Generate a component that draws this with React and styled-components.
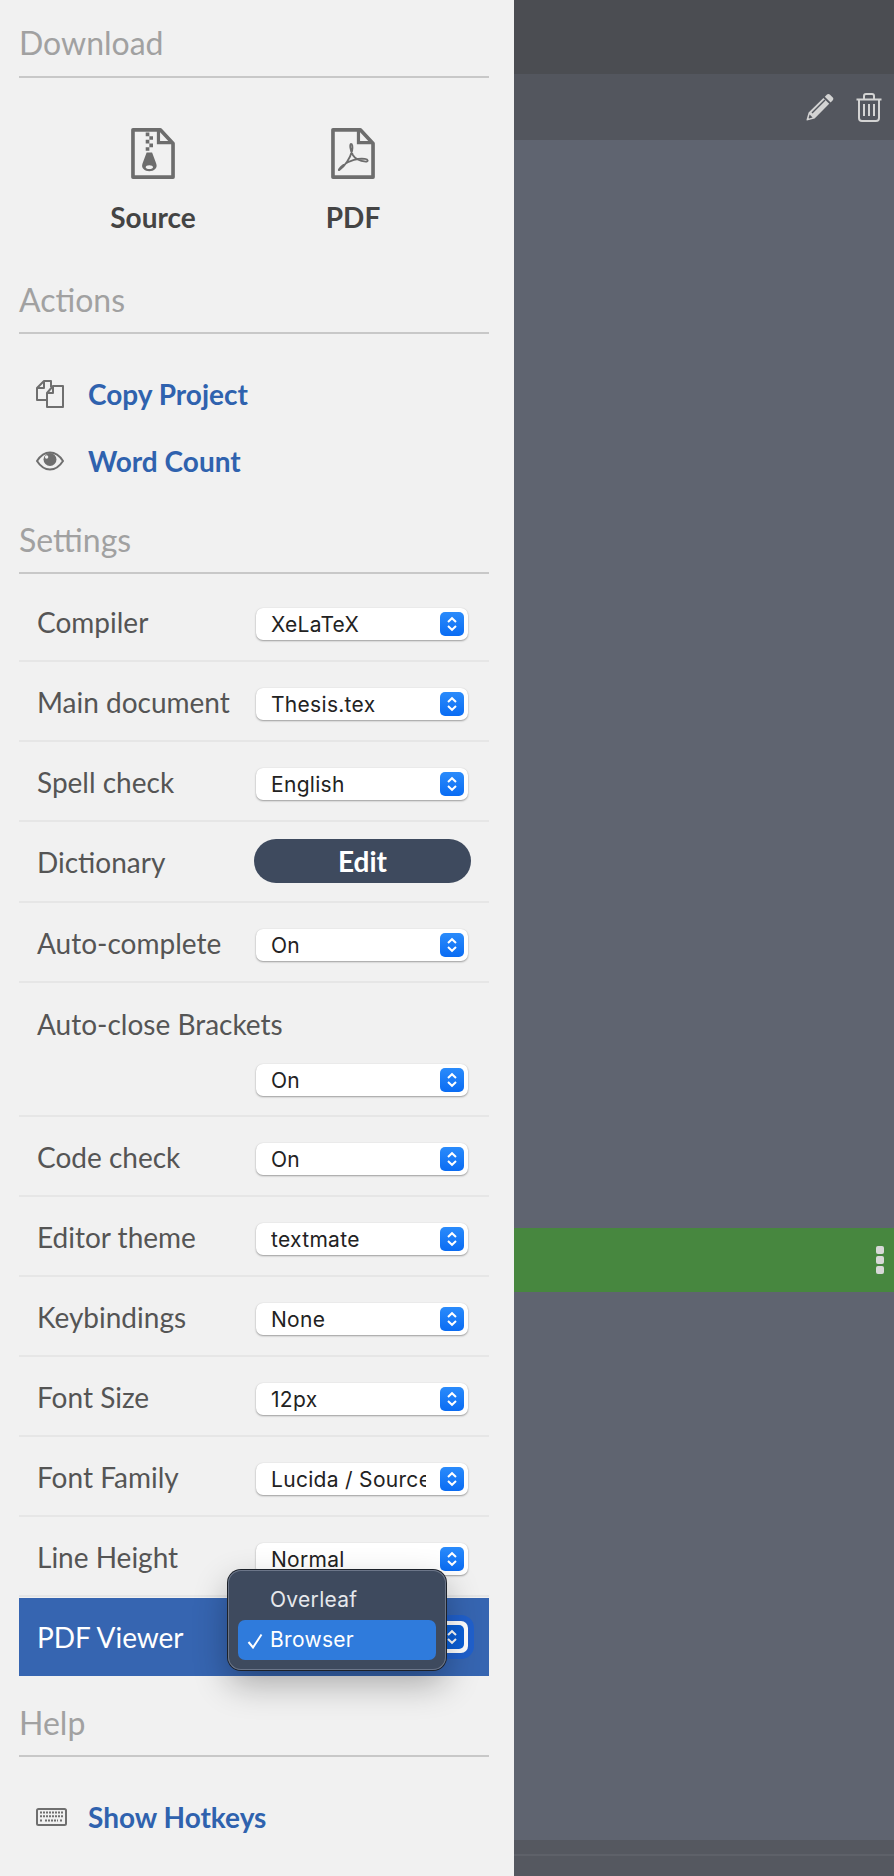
import React from "react";
import styled, { createGlobalStyle } from "styled-components";

const rows = [
  { label: "Compiler", value: "XeLaTeX" },
  { label: "Main document", value: "Thesis.tex" },
  { label: "Spell check", value: "English" },
  { label: "Dictionary", button: "Edit" },
  { label: "Auto-complete", value: "On" },
  { label: "Auto-close Brackets", value: "On", stacked: true },
  { label: "Code check", value: "On" },
  { label: "Editor theme", value: "textmate" },
  { label: "Keybindings", value: "None" },
  { label: "Font Size", value: "12px" },
  { label: "Font Family", value: "Lucida / Source Code Pro" },
  { label: "Line Height", value: "Normal" },
];

const ZipIcon = () => (
  <svg width="48" height="56" viewBox="0 0 48 56">
    <path d="M2 2H32L46 17V54H2Z" fill="none" stroke="#6d6d6d" strokeWidth="4" strokeLinejoin="round" />
    <path d="M30 3V16H45" fill="none" stroke="#6d6d6d" strokeWidth="3.5" />
    <path d="M16 5h4v4h-4zM20 9h4v4h-4zM16 13h4v4h-4zM20 17h4v4h-4zM16 21h4v4h-4z" fill="#6d6d6d" />
    <path
      fillRule="evenodd"
      d="M17 27H23L27.5 39C29.5 44 25 47.5 20 47.5C15 47.5 10.5 44 12.5 39ZM20 41C17.5 41 16 42 16 43C16 44 17.5 45 20 45C22.5 45 24 44 24 43C24 42 22.5 41 20 41Z"
      fill="#6d6d6d"
    />
  </svg>
);

const PdfIcon = () => (
  <svg width="48" height="56" viewBox="0 0 48 56">
    <path d="M2 2H32L46 17V54H2Z" fill="none" stroke="#6d6d6d" strokeWidth="4" strokeLinejoin="round" />
    <path d="M30 3V16H45" fill="none" stroke="#6d6d6d" strokeWidth="3.5" />
    <path
      d="M9 46C15 42 21 33 23 25C24 20 23 17.5 21.8 17.5C20.4 17.5 20.6 24 24 30C27 35 33 36.5 38 37C41 37 41 34.6 37 34C30 33 20 35.5 13 41C9 44 7.5 47 9 46Z"
      fill="none"
      stroke="#6d6d6d"
      strokeWidth="2"
      strokeLinejoin="round"
    />
  </svg>
);

const CopyIcon = () => (
  <svg width="28" height="28" viewBox="0 0 28 28">
    <path
      d="M11 20H1V8L8 1H15V7M8 1V8H1"
      fill="none"
      stroke="#6f6f6f"
      strokeWidth="2"
      strokeLinejoin="round"
    />
    <path d="M11 27V13L17 6H27V27ZM17 6V13H11" fill="none" stroke="#6f6f6f" strokeWidth="2" strokeLinejoin="round" />
  </svg>
);

const EyeIcon = () => (
  <svg width="28" height="20" viewBox="0 0 28 20">
    <path
      d="M1 10C4.5 4.5 9 1.5 14 1.5C19 1.5 23.5 4.5 27 10C23.5 15.5 19 18.5 14 18.5C9 18.5 4.5 15.5 1 10Z"
      fill="none"
      stroke="#6f6f6f"
      strokeWidth="2"
    />
    <circle cx="14" cy="8.5" r="6.5" fill="#6f6f6f" />
    <circle cx="10.6" cy="6" r="1.7" fill="#f1f1f1" />
  </svg>
);

const KeyboardIcon = () => (
  <svg width="31" height="18" viewBox="0 0 31 18">
    <rect x="1" y="1" width="29" height="16" rx="1.5" fill="none" stroke="#6f6f6f" strokeWidth="2" />
    <path
      d="M4 4.5h23M4 8.2h23M4 12.5h3M9 12.5h13M24 12.5h3"
      fill="none"
      stroke="#6f6f6f"
      strokeWidth="2"
      strokeDasharray="2 1"
    />
  </svg>
);

const PencilIcon = () => (
  <svg width="28" height="28" viewBox="0 0 28 28">
    <path
      d="M21 1.5C21.8 .8 23 .8 23.8 1.5L26.8 4.5C27.5 5.2 27.5 6.4 26.8 7.2L24.6 9.4L18.8 3.7ZM17.4 5.1L23.2 10.8L8.6 25.4L1 27.4C.6 27.4 .4 27.2 .5 26.8L2.6 19.6Z"
      fill="#d3d3d3"
    />
    <path d="M19 7L6 20" stroke="#53565e" strokeWidth="1.4" />
    <path d="M3.6 21.6L6.6 24.6L3 25.6L2.6 25.1Z" fill="#53565e" />
  </svg>
);

const TrashIcon = () => (
  <svg width="26" height="29" viewBox="0 0 26 29">
    <path
      d="M.5 6.5H25.5M3 7V25C3 26.8 4.2 28 6 28H20C21.8 28 23 26.8 23 25V7M8 6V3C8 1.8 9 1 10 1H16C17 1 18 1.8 18 3V6"
      fill="none"
      stroke="#d3d3d3"
      strokeWidth="2"
    />
    <path d="M8 11V23M13 11V23M18 11V23" stroke="#d3d3d3" strokeWidth="2" />
  </svg>
);

const StepperIcon = () => (
  <svg width="12" height="16" viewBox="0 0 12 16">
    <path d="M2 6L6 2.2L10 6M2 10L6 13.8L10 10" fill="none" stroke="#fff" strokeWidth="2" />
  </svg>
);

const CheckIcon = () => (
  <svg width="16" height="16" viewBox="0 0 16 16">
    <path d="M1.5 9L6 14.5L14.5 1.5" fill="none" stroke="#fff" strokeWidth="2" />
  </svg>
);

const Select = ({ value, focused }) => (
  <SelectBox focused={focused}>
    <SelectValue>{value}</SelectValue>
    <Stepper focused={focused}>
      <StepperIcon />
    </Stepper>
  </SelectBox>
);

const App = () => {
  return (
    <Page>
      <GlobalStyle />
      <Sidebar>
        <Heading>Download</Heading>
        <DownloadRow>
          <DownloadItem>
            <ZipIcon />
            <DownloadLabel>Source</DownloadLabel>
          </DownloadItem>
          <DownloadItem>
            <PdfIcon />
            <DownloadLabel>PDF</DownloadLabel>
          </DownloadItem>
        </DownloadRow>

        <Heading>Actions</Heading>
        <LinkList>
          <LinkRow>
            <LinkIcon>
              <CopyIcon />
            </LinkIcon>
            Copy Project
          </LinkRow>
          <LinkRow>
            <LinkIcon>
              <EyeIcon />
            </LinkIcon>
            Word Count
          </LinkRow>
        </LinkList>

        <Heading>Settings</Heading>
        <SettingsList>
          {rows.map((row) => (
            <SettingRow key={row.label} stacked={row.stacked} tall={!!row.button}>
              <SettingLabel>{row.label}</SettingLabel>
              {row.button ? <EditButton>{row.button}</EditButton> : <Select value={row.value} />}
            </SettingRow>
          ))}
          <ActiveRow>
            <SettingLabel active>PDF Viewer</SettingLabel>
            <Select value="Browser" focused />
            <Popup>
              <PopupItem>Overleaf</PopupItem>
              <PopupItem selected>
                <PopupCheck>
                  <CheckIcon />
                </PopupCheck>
                Browser
              </PopupItem>
            </Popup>
          </ActiveRow>
        </SettingsList>

        <Heading>Help</Heading>
        <LinkList>
          <LinkRow>
            <LinkIcon>
              <KeyboardIcon />
            </LinkIcon>
            Show Hotkeys
          </LinkRow>
        </LinkList>
      </Sidebar>

      <Main>
        <TopBar />
        <FileBar>
          <PencilIcon />
          <TrashIcon />
        </FileBar>
        <EditorPane />
        <GreenBar>
          <Dots>
            <Dot />
            <Dot />
            <Dot />
          </Dots>
        </GreenBar>
        <LowerPane />
        <Footer />
      </Main>
    </Page>
  );
};

const GlobalStyle = createGlobalStyle`
  html, body {
    margin: 0;
    padding: 0;
    background: #5f6470;
  }
`;

const Page = styled.div`
  display: flex;
  width: 894px;
  height: 1876px;
  overflow: hidden;
  font-family: Lato, "Liberation Sans", sans-serif;
`;

const Sidebar = styled.div`
  width: 514px;
  flex-shrink: 0;
  box-sizing: border-box;
  padding: 0 25px 0 19px;
  background: #f1f1f1;
`;

const Heading = styled.h4`
  margin: 0;
  padding: 24px 0 12px 0;
  font-size: 32px;
  line-height: 40px;
  font-weight: 400;
  color: #a1a1a1;
  border-bottom: 2px solid #c8c8c8;

  &:first-child {
    padding: 23px 0 13px 0;
  }
`;

const DownloadRow = styled.div`
  display: flex;
  padding: 50px 0 20px 34px;
  height: 108px;
`;

const DownloadItem = styled.div`
  display: flex;
  flex-direction: column;
  align-items: center;
  width: 200px;
`;

const DownloadLabel = styled.div`
  margin-top: 19px;
  font-size: 28px;
  line-height: 38px;
  font-weight: 700;
  color: #444;
`;

const LinkList = styled.div`
  padding: 26px 0 2px 17px;
`;

const LinkRow = styled.div`
  display: flex;
  align-items: center;
  height: 67px;
  font-size: 28px;
  font-weight: 700;
  color: #2f62ae;
`;

const LinkIcon = styled.span`
  display: flex;
  width: 52px;
  flex-shrink: 0;
`;

const SettingsList = styled.div`
  padding: 8px 0 3px;
`;

const SettingRow = styled.div`
  display: flex;
  flex-direction: ${(props) => (props.stacked ? "column" : "row")};
  align-items: ${(props) => (props.stacked ? "stretch" : "center")};
  justify-content: ${(props) => (props.stacked ? "flex-start" : "space-between")};
  box-sizing: border-box;
  height: ${(props) => (props.stacked ? "134px" : props.tall ? "81px" : "80px")};
  padding: ${(props) => (props.stacked ? "27px 21px 0 18px" : "6px 21px 0 18px")};
  border-bottom: 2px solid #e6e6e6;

  & > :last-child {
    align-self: ${(props) => (props.stacked ? "flex-end" : "auto")};
    margin-top: ${(props) => (props.stacked ? "21px" : props.tall ? "-8px" : "0")};
  }
`;

const ActiveRow = styled.div`
  position: relative;
  display: flex;
  align-items: center;
  justify-content: space-between;
  box-sizing: border-box;
  height: 78px;
  margin-top: 1px;
  padding: 0 21px 0 18px;
  background: #3665b1;
`;

const SettingLabel = styled.div`
  font-size: 28px;
  line-height: 38px;
  margin-top: ${(props) => (props.active ? "0" : "-5px")};
  color: ${(props) => (props.active ? "#fff" : "#555")};
`;

const SelectBox = styled.div`
  display: flex;
  align-items: center;
  justify-content: space-between;
  box-sizing: border-box;
  width: 212px;
  height: 32px;
  padding: 0 4px 0 15px;
  background: #fff;
  border-radius: 7px;
  box-shadow: ${(props) =>
    props.focused
      ? "0 0 0 6px #2060cc"
      : "0 1px 2px rgba(0, 0, 0, 0.35), 0 0 1px rgba(0, 0, 0, 0.12)"};
`;

const SelectValue = styled.span`
  width: 155px;
  height: 32px;
  overflow: hidden;
  white-space: nowrap;
  font-family: Inter, "Liberation Sans", sans-serif;
  font-size: 21px;
  letter-spacing: 0.3px;
  line-height: 34px;
  color: #222;
`;

const Stepper = styled.span`
  display: flex;
  align-items: center;
  justify-content: center;
  width: 24px;
  height: 24px;
  border-radius: 5px;
  background: ${(props) =>
    props.focused ? "#0a5fd8" : "linear-gradient(#2a8bfb, #0a6cf3)"};
`;

const EditButton = styled.button`
  width: 217px;
  height: 44px;
  margin-right: -3px;
  padding: 0;
  border: 0;
  border-radius: 22px;
  background: #3e4a5e;
  font-family: inherit;
  font-size: 28px;
  font-weight: 700;
  color: #fff;
`;

const Popup = styled.div`
  position: absolute;
  z-index: 2;
  left: 209px;
  top: -28px;
  box-sizing: border-box;
  width: 218px;
  height: 100px;
  padding: 10px;
  background: #3e4a5e;
  border-radius: 13px;
  box-shadow: inset 0 0 0 1px #6c7689, 0 0 0 1px #1c2129, 0 14px 34px rgba(0, 0, 0, 0.3);
`;

const PopupItem = styled.div`
  position: relative;
  height: 40px;
  padding-left: 32px;
  border-radius: 7px;
  background: ${(props) => (props.selected ? "#2f7bdc" : "transparent")};
  font-family: Inter, "Liberation Sans", sans-serif;
  font-size: 21px;
  letter-spacing: 0.3px;
  line-height: 40px;
  color: ${(props) => (props.selected ? "#fff" : "#e6e8ec")};
`;

const PopupCheck = styled.span`
  position: absolute;
  left: 9px;
  top: 13px;
  display: flex;
`;

const Main = styled.div`
  flex: 1;
  display: flex;
  flex-direction: column;
  min-width: 0;
`;

const TopBar = styled.div`
  height: 74px;
  background: #4b4d52;
`;

const FileBar = styled.div`
  display: flex;
  align-items: center;
  justify-content: flex-end;
  gap: 22px;
  height: 66px;
  padding: 0 12px 0 0;
  box-sizing: border-box;
  background: #53565e;
`;

const EditorPane = styled.div`
  height: 1088px;
  background: #5f6470;
`;

const GreenBar = styled.div`
  display: flex;
  align-items: center;
  justify-content: flex-end;
  height: 64px;
  padding: 0 10px 0 0;
  background: #47873f;
`;

const Dots = styled.div`
  display: flex;
  flex-direction: column;
  gap: 2px;
`;

const Dot = styled.span`
  width: 8px;
  height: 8px;
  border-radius: 2px;
  background: #d8d8d8;
`;

const LowerPane = styled.div`
  flex: 1;
  background: #5f6470;
`;

const Footer = styled.div`
  height: 36px;
  background: linear-gradient(#555860 14px, #5e6169 14px, #5e6169 16px, #555860 16px);
`;

export default App;
